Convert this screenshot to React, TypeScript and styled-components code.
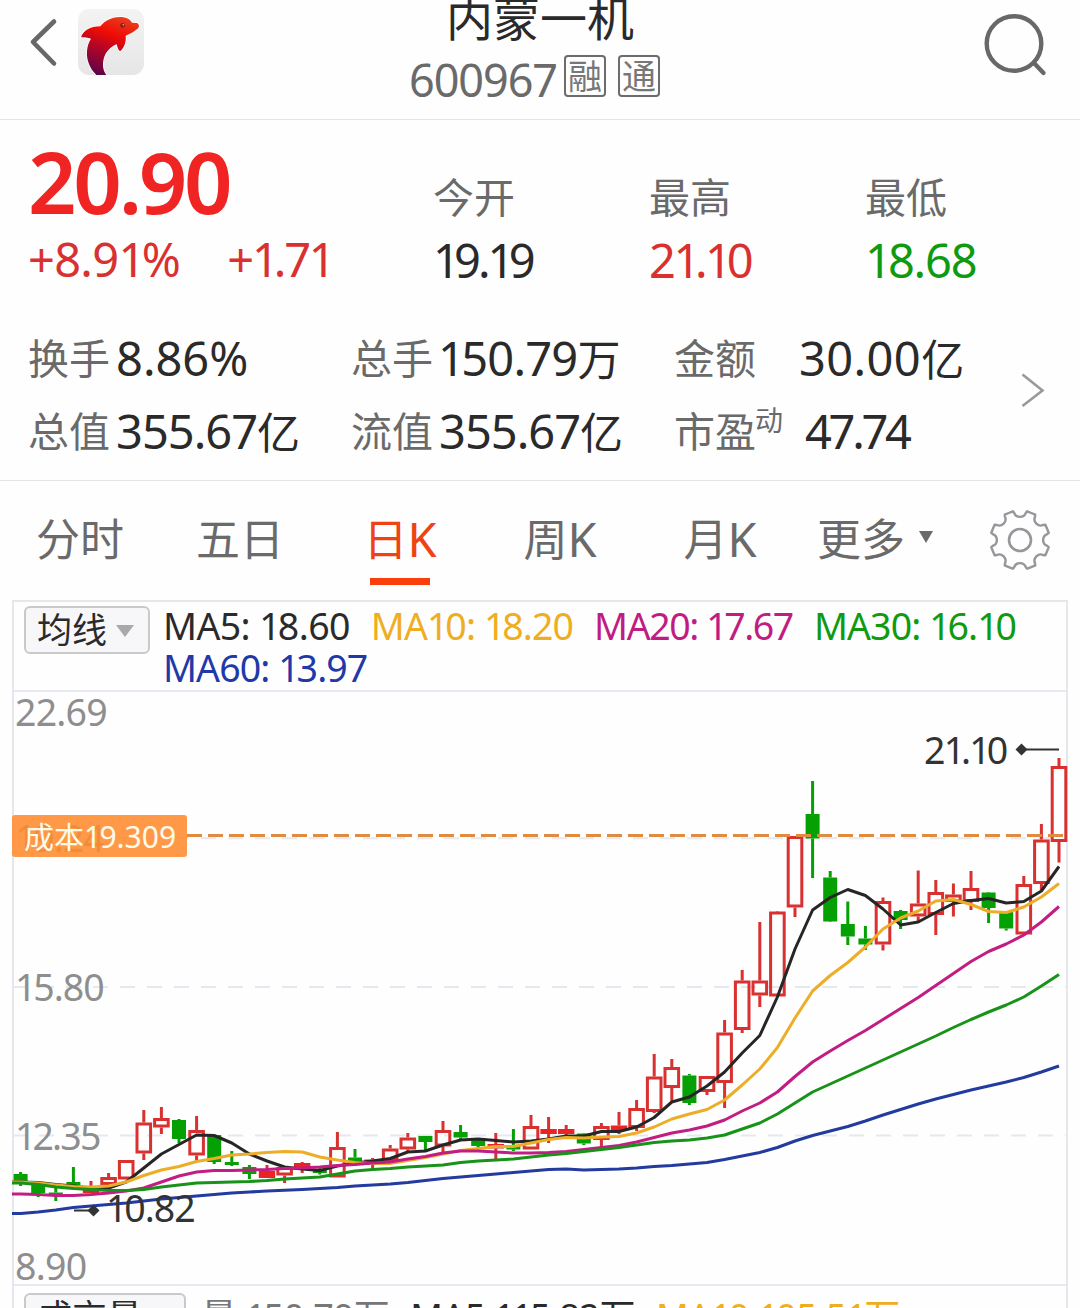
import React from 'react';
import styled, { createGlobalStyle } from 'styled-components';

const Global = createGlobalStyle`
  * { box-sizing: border-box; }
  body { margin: 0; background: #fefefe; }
`;

const Page = styled.div`
  width: 1080px;
  height: 1308px;
  overflow: hidden;
  display: flex;
  flex-direction: column;
  background: #fefefe;
  color: #2a2a2a;
  font-family: 'Noto Sans', 'Noto Sans CJK SC', sans-serif;
  white-space: nowrap;
`;

const Text = styled.span<{ $size: number; $ls?: number; $color?: string; $weight?: number; $h?: number }>`
  --ls: ${(p) => p.$ls ?? 0}px;
  display: block;
  font-size: ${(p) => p.$size}px;
  line-height: ${(p) => p.$h ?? 48}px;
  letter-spacing: var(--ls);
  font-weight: ${(p) => p.$weight ?? 400};
  color: ${(p) => p.$color ?? '#2a2a2a'};
`;
// The figure one is narrower than the other figures
const One = styled.span`
  letter-spacing: calc(var(--ls, 0px) - 0.06em);
`;

function Num({ v }: { v: string }) {
  return <>{v.split(/(1)/).map((s, i) => (s === '1' ? <One key={i}>1</One> : s))}</>;
}

const Header = styled.header`
  height: 120px;
  flex: none;
  display: grid;
  grid-template-columns: 360px 1fr 360px;
  border-bottom: 1px solid #e4e4e4;
`;
const HeaderLeft = styled.div`
  display: flex;
  align-items: flex-start;
  padding: 9px 0 0 28px;
  gap: 18px;
`;
const HeaderRight = styled.div`
  display: flex;
  justify-content: flex-end;
  padding: 12px 32px 0 0;
`;
const TitleBlock = styled.div`
  display: flex;
  flex-direction: column;
  align-items: center;
`;
const CodeRow = styled.div`
  display: flex;
  align-items: flex-start;
  margin-top: 19px;
  margin-left: -11px;
`;
const Badge = styled.span`
  width: 42px;
  height: 42px;
  margin-left: 12px;
  border: 2px solid #6c6c6c;
  border-radius: 4px;
  display: flex;
  align-items: center;
  justify-content: center;
  font-size: 34px;
  line-height: 38px;
  color: #777;
  ${Text} + & { margin-left: 7px; }
`;

const Quote = styled.section`
  height: 361px;
  flex: none;
  border-bottom: 1px solid #e4e4e4;
`;
const PriceGrid = styled.div`
  display: grid;
  grid-template-columns: 405px 216px 216px 1fr;
  height: 164px;
  padding-left: 28px;
`;
const PriceCell = styled.div`
  display: flex;
  flex-direction: column;
  padding-top: 14px;
`;
const ChangeRow = styled.div`
  display: flex;
  gap: 47px;
`;
const QuoteCell = styled.div`
  display: flex;
  flex-direction: column;
  gap: 15px;
  padding-top: 53px;
`;
const StatsArea = styled.div`
  display: flex;
  align-items: center;
  padding: 50px 34px 0 28px;
`;
const StatsGrid = styled.div`
  display: grid;
  grid-template-columns: 323px 323px 1fr;
  grid-auto-rows: 48px;
  row-gap: 25px;
  flex: 1;
`;
const Stat = styled.div<{ $gap: number }>`
  display: flex;
  align-items: flex-start;
  gap: ${(p) => p.$gap}px;
`;
const Chevron = styled.svg`
  margin-bottom: 9px;
`;
const Sup = styled.span`
  font-size: 28px;
  line-height: 28px;
  color: #6a6a6a;
  margin: -1px 16px 0 -7px;
`;
const Unit = styled.span`
  font-size: 43px;
  line-height: 40px;
  letter-spacing: 0;
`;

const Tabs = styled.nav`
  height: 119px;
  flex: none;
  display: grid;
  grid-template-columns: repeat(5, 160px) 150px 1fr;
`;
const Tab = styled.div<{ $active?: boolean }>`
  display: flex;
  flex-direction: column;
  align-items: center;
  padding-top: 32px;
  font-size: 44px;
  line-height: 52px;
  color: ${(p) => (p.$active ? '#ee4314' : '#6a6a6a')};
`;
const TabLabel = styled.span<{ $gap?: number }>`
  display: flex;
  align-items: center;
  gap: ${(p) => p.$gap ?? 0}px;
`;
const K = styled.span`
  font-size: 47px;
`;
const Underline = styled.i`
  width: 60px;
  height: 7px;
  margin-top: 13px;
  background: #fb3f0c;
`;
const Caret = styled.i<{ $color: string; $w: number; $ht: number }>`
  width: 0;
  height: 0;
  margin-bottom: 4px;
  border-left: ${(p) => p.$w}px solid transparent;
  border-right: ${(p) => p.$w}px solid transparent;
  border-top: ${(p) => p.$ht}px solid ${(p) => p.$color};
`;
const GearCell = styled.div`
  padding: 28px 0 0 38.5px;
`;

const Panel = styled.section`
  width: 1056px;
  height: 720px;
  flex: none;
  margin-left: 12px;
  border: 2px solid #e6e7ec;
`;
const Legend = styled.div`
  height: 90px;
  display: flex;
  padding: 4px 0 0 10px;
  border-bottom: 2px solid #e6e9f0;
`;
const Select = styled.div<{ $w: number }>`
  width: ${(p) => p.$w}px;
  height: 48px;
  flex: none;
  display: flex;
  align-items: center;
  gap: 9px;
  padding: 0 0 0 11px;
  border: 2px solid #c9c9c9;
  border-radius: 6px;
  background: #f7f7fa;
  font-size: 35px;
  line-height: 42px;
  ${Caret} { margin: 2px 0 0; }
`;
const LegendItems = styled.div`
  display: flex;
  flex-wrap: wrap;
  column-gap: 21px;
  margin-left: 13px;
  align-content: flex-start;
  margin-top: -1px;
`;
const ChartArea = styled.div`
  position: relative;
  height: 592px;
`;
const ChartSvg = styled.svg`
  display: block;
  margin-left: -2px;
`;
const AxisLabel = styled(Text)<{ $top: number }>`
  position: absolute;
  left: 1px;
  top: ${(p) => p.$top}px;
`;
const Marker = styled(Text)<{ $left: number; $top: number }>`
  position: absolute;
  left: ${(p) => p.$left}px;
  top: ${(p) => p.$top}px;
`;
const CostTag = styled.div`
  position: absolute;
  left: -2px;
  top: 123px;
  width: 175px;
  height: 42px;
  padding: 0 0 3px 12px;
  display: flex;
  align-items: center;
  border-radius: 3px;
  background: rgba(255, 139, 47, 0.88);
  color: #fffbe9;
  font-size: 30px;
`;
const VolumeBar = styled.div`
  display: flex;
  padding: 7px 0 0 10px;
  border-top: 2px solid #e6e9f0;
`;
const VolumeItems = styled.div`
  display: flex;
  gap: 21px;
  margin-left: 15px;
`;

const RED = '#d93030';
const GREEN = '#04a004';

type Kind = 'r' | 'R' | 'g';
// high, body top, body bottom, low, kind (r hollow, R solid red, g solid green)
const candles: [number, number, number, number, Kind][] = [
  [1172, 1174, 1184, 1186, 'g'], [1183, 1184, 1193, 1197, 'g'], [1188, 1192.5, 1194.5, 1201, 'g'],
  [1167, 1182, 1185, 1186, 'g'], [1181, 1189, 1193, 1193, 'R'], [1173, 1177, 1185, 1187, 'r'],
  [1160, 1160, 1179.5, 1179, 'r'], [1110, 1122.5, 1153.5, 1160, 'r'], [1107, 1118, 1127.5, 1134, 'r'],
  [1119, 1120, 1139, 1143, 'g'], [1116, 1130, 1155.5, 1161, 'r'], [1135, 1135, 1162, 1164, 'g'],
  [1151, 1162, 1165, 1166, 'g'], [1165, 1167, 1174, 1179, 'g'], [1165, 1171, 1178, 1178, 'R'],
  [1166, 1167, 1175.5, 1183, 'r'], [1162, 1163, 1170, 1173, 'R'], [1168, 1169, 1173, 1174.5, 'g'],
  [1132, 1147, 1177.5, 1177, 'r'], [1149, 1157.5, 1161, 1162, 'g'], [1158, 1159.5, 1162.5, 1169, 'R'],
  [1145, 1148.5, 1161, 1161, 'r'], [1133, 1137.5, 1149.5, 1153, 'r'], [1136, 1136, 1142, 1150, 'g'],
  [1121, 1130, 1146.5, 1153, 'r'], [1125, 1132, 1137.5, 1140, 'g'], [1138, 1140, 1146, 1148, 'g'],
  [1133, 1144, 1148.5, 1159, 'R'], [1129, 1146, 1149.5, 1151, 'g'], [1115, 1126, 1149.5, 1149, 'r'],
  [1117, 1129, 1134, 1143, 'R'], [1125, 1129, 1134, 1135, 'R'], [1133, 1133.5, 1143.5, 1145, 'g'],
  [1123, 1126, 1140, 1147, 'r'], [1112, 1125.5, 1130.5, 1134, 'R'], [1100, 1108, 1128, 1131, 'r'],
  [1054, 1076.5, 1112, 1113, 'r'], [1059, 1067, 1088, 1101, 'r'], [1074, 1075.5, 1103, 1105, 'g'],
  [1076, 1076, 1092, 1095, 'r'], [1020, 1032.5, 1083, 1108, 'r'], [970, 980.5, 1030, 1033, 'r'],
  [922, 980.5, 995.5, 1007, 'r'], [911, 911.5, 996.5, 996, 'r'], [836, 836, 907.5, 917, 'r'],
  [781, 814, 838.5, 878, 'g'], [871, 877.5, 921.5, 922, 'g'], [901.5, 924, 936.5, 945, 'g'],
  [926, 938.5, 944.5, 950, 'g'], [897.5, 901, 944.5, 950.5, 'r'], [910, 911, 920, 929, 'g'],
  [870.5, 903.5, 916.5, 923, 'r'], [880, 892, 915, 935, 'r'], [883.5, 894.5, 902, 916.5, 'r'],
  [871, 888, 902, 910, 'r'], [892, 892.5, 908, 923, 'g'], [911, 912, 928.5, 930.5, 'g'],
  [876, 884, 934.5, 934, 'r'], [824, 839.5, 884, 890, 'r'], [758, 766, 842, 862.5, 'r'],
];

const ma5 = [1182, 1182.5, 1184.5, 1186, 1188, 1188, 1182, 1168, 1154, 1144.5, 1135, 1135.5, 1143, 1154, 1161, 1167, 1169, 1170.5, 1166, 1163, 1161, 1158.5, 1152, 1151, 1145, 1140, 1139, 1140.5, 1142, 1141, 1139, 1136, 1136, 1131.5, 1131.5, 1127, 1117.5, 1102, 1097, 1086, 1072, 1053, 1035.5, 997, 949, 910, 897.5, 889.5, 895.5, 909, 925, 922, 912.5, 903.5, 900.5, 898.5, 903, 901.5, 891, 866.5];
const ma10 = [1182, 1183, 1185, 1186.5, 1187, 1186, 1182, 1175.5, 1170, 1166.5, 1161.5, 1158.5, 1155, 1154, 1152.5, 1151.5, 1152, 1157, 1160, 1162.5, 1163.5, 1163.5, 1160.5, 1157.5, 1154, 1150.5, 1148.5, 1146.5, 1146.5, 1143, 1139.5, 1137.5, 1138, 1137, 1136.5, 1133, 1127, 1119, 1114, 1109.5, 1100, 1085, 1069, 1047.5, 1018, 991, 975.5, 962.5, 947, 929, 918, 911, 901, 899.5, 904.5, 911.5, 912.5, 907, 897, 883.5];
const ma20 = [1194, 1194.5, 1195.5, 1195.5, 1194.5, 1193, 1191, 1188, 1182, 1176, 1172, 1170.5, 1170.5, 1170, 1169.5, 1168.5, 1168, 1167, 1165.5, 1164.5, 1163, 1162, 1159, 1156.5, 1153, 1151, 1151, 1152, 1153, 1153, 1152.5, 1151.5, 1149.5, 1147.5, 1145.5, 1142, 1137.5, 1133, 1130, 1126, 1120, 1111, 1103, 1092, 1076.5, 1062, 1051, 1040.5, 1030.5, 1019.5, 1008.5, 997.5, 985.5, 973.5, 961.5, 951.5, 944, 935, 922, 906.5];
const ma30 = [1183, 1184.5, 1187, 1188.5, 1189.5, 1190.5, 1190.5, 1189.5, 1187, 1185, 1183, 1182.5, 1182, 1181.5, 1180.5, 1179, 1178, 1177, 1174, 1171, 1169.5, 1168.5, 1167, 1166, 1165, 1162.5, 1161, 1160, 1159, 1157, 1155, 1153.5, 1151.5, 1149.5, 1147.5, 1145, 1142.5, 1141, 1140, 1138, 1135, 1129, 1123, 1114, 1103, 1092, 1084, 1076, 1068, 1060, 1052, 1044, 1036, 1027.5, 1019.5, 1012, 1005, 997, 986, 974.5];
const ma60 = [1213.5, 1212, 1210, 1207.5, 1206, 1204.5, 1203, 1201, 1199, 1197.5, 1196, 1194.5, 1193, 1192, 1191, 1190.2, 1189.4, 1188.5, 1187.5, 1186, 1185, 1184, 1182.5, 1180.5, 1178.5, 1177, 1175.5, 1174, 1172.5, 1171, 1169.5, 1169, 1170, 1169.5, 1169, 1168, 1166.5, 1165.5, 1164, 1162.5, 1159.5, 1156, 1152.5, 1147.5, 1141, 1135.5, 1131, 1126.5, 1121, 1115, 1109.5, 1104, 1099, 1094.5, 1090, 1086, 1082, 1077.5, 1072, 1066];

const xOf = (i: number) => 20.6 + 17.6 * i;
const line = (v: number[]) => `12,${v[0]} ` + v.map((y, i) => `${xOf(i).toFixed(1)},${y}`).join(' ');

function Candle({ i }: { i: number }) {
  const [hi, top, bot, lo, kind] = candles[i];
  const x = xOf(i);
  const c = kind === 'g' ? GREEN : RED;
  return (
    <g stroke={c} strokeWidth={3}>
      {hi < top && <line x1={x} x2={x} y1={hi} y2={top} />}
      {lo > bot && <line x1={x} x2={x} y1={bot} y2={lo} />}
      {kind === 'r' ? (
        <rect x={x - 6.8} y={top + 1.5} width={13.6} height={bot - top - 3} fill="none" />
      ) : (
        <rect x={x - (kind === 'g' ? 7 : 8.2)} y={top} width={kind === 'g' ? 14 : 16.4} height={bot - top} fill={kind === 'R' ? '#ea2424' : c} stroke="none" />
      )}
    </g>
  );
}

function Chart() {
  return (
    <ChartSvg width={1056} height={592} viewBox="12 692 1056 592">
      <g stroke="#e6e8ef" strokeWidth={2} strokeDasharray="15 12">
        <line x1={12} x2={1067} y1={838.3} y2={838.3} />
        <line x1={12} x2={1067} y1={987} y2={987} />
        <line x1={12} x2={1067} y1={1135.5} y2={1135.5} />
      </g>
      {candles.map((_, i) => <Candle key={i} i={i} />)}
      <g fill="none" strokeWidth={3} strokeLinejoin="round">
        <polyline points={line(ma5)} stroke="#262626" />
        <polyline points={line(ma10)} stroke="#ecae28" />
        <polyline points={line(ma20)} stroke="#c11d82" />
        <polyline points={line(ma30)} stroke="#189218" />
        <polyline points={line(ma60)} stroke="#233a9e" />
      </g>
      <line x1={187} x2={1063} y1={835.5} y2={835.5} stroke="#e08a42" strokeWidth={3} strokeDasharray="15 6" />
      <g fill="#333" stroke="#333" strokeWidth={2}>
        <line x1={1022} x2={1059} y1={749.5} y2={749.5} />
        <path d="M1015.5 749.5l6-6 6 6-6 6z" stroke="none" />
        <line x1={74} x2={94} y1={1210.5} y2={1210.5} />
        <path d="M87.5 1210.5l6-6 6 6-6 6z" stroke="none" />
      </g>
    </ChartSvg>
  );
}

function Dolphin() {
  return (
    <svg width="66" height="66" viewBox="234 27 198 198">
      <defs>
        <linearGradient id="tile" x1="0" y1="0" x2="0" y2="1">
          <stop offset="0" stopColor="#f3f3f3" /><stop offset="1" stopColor="#e6e6e6" />
        </linearGradient>
        <linearGradient id="skin" x1="0.65" y1="0" x2="0.3" y2="1">
          <stop offset="0" stopColor="#ea3a1c" /><stop offset="0.3" stopColor="#ee0c04" />
          <stop offset="0.55" stopColor="#b80524" /><stop offset="1" stopColor="#5c0448" />
        </linearGradient>
      </defs>
      <rect x="234" y="27" width="198" height="198" rx="34" fill="url(#tile)" />
      <path
        d="M243 112C250 92 270 79 301 79C318 58 341 50 364 51C382 52 392 60 396 68L410 69C418 71 419 81 413 86C402 95 390 101 377 107C379 125 373 143 360 154C353 148 353 141 350 133C334 139 320 153 313 170C306 190 308 209 319 225H289C269 205 259 180 261 154C262 139 266 127 273 116C263 113 253 112 243 112Z"
        fill="url(#skin)" stroke="#fff" strokeWidth="4" paintOrder="stroke"
      />
      <circle cx="368" cy="76" r="7" fill="#7a2020" /><circle cx="370" cy="74" r="2.5" fill="#d99" />
    </svg>
  );
}

function Gear() {
  const pt = (r: number, deg: number) => {
    const a = (deg * Math.PI) / 180;
    return `${(31 + r * Math.cos(a)).toFixed(2)} ${(31 + r * Math.sin(a)).toFixed(2)}`;
  };
  // eight teeth separated by round notches
  let d = '';
  for (let k = 0; k < 8; k++) {
    const a = k * 45;
    d += `${k ? 'L' : 'M'}${pt(29.6, a - 31)}Q${pt(29.4, a - 22.5)} ${pt(29.6, a - 14)}`;
    d += `L${pt(27.5, a - 12)}C${pt(22.2, a - 10)} ${pt(22.2, a + 10)} ${pt(27.5, a + 12)}`;
  }
  return (
    <svg width="62" height="62" viewBox="0 0 62 62" fill="none" stroke="#96969b" strokeWidth="2.4" strokeLinejoin="round">
      <path d={d + 'Z'} />
      <circle cx="31" cy="31" r="11" strokeWidth="2.6" />
    </svg>
  );
}

const GRAY = '#6a6a6a';
const AXIS = '#8e8e8e';

export default function App() {
  return (
    <Page>
      <Global />
      <Header>
        <HeaderLeft>
          <svg width="32" height="66" viewBox="28 9 32 66" fill="none" stroke="#686868" strokeWidth="4.6" strokeLinecap="round" strokeLinejoin="round">
            <path d="M54 21.5L33 42L54 63.5" />
          </svg>
          <Dolphin />
        </HeaderLeft>
        <TitleBlock>
          <Text $size={47} $h={36}>内蒙一机</Text>
          <CodeRow>
            <Text $size={45} $h={50} $ls={-1.1} $color={GRAY}>600967</Text>
            <Badge>融</Badge>
            <Badge>通</Badge>
          </CodeRow>
        </TitleBlock>
        <HeaderRight>
          <svg width="64" height="66" viewBox="984 12 64 66" fill="none" stroke="#686868" strokeWidth="4.4" strokeLinecap="round">
            <circle cx="1014" cy="43.5" r="27.3" />
            <path d="M1034 63L1043.5 73" />
          </svg>
        </HeaderRight>
      </Header>

      <Quote>
        <PriceGrid>
          <PriceCell>
            <Text $size={85} $h={94} $weight={600} $ls={-3.3} $color="#f12424">20.90</Text>
            <ChangeRow>
              <Text $size={47} $h={62} $ls={-0.7} $color={RED}><Num v="+8.91%" /></Text>
              <Text $size={47} $h={62} $ls={-2.2} $color={RED}><Num v="+1.71" /></Text>
            </ChangeRow>
          </PriceCell>
          <QuoteCell><Text $size={41} $color={GRAY}>今开</Text><Text $size={47} $ls={-3}><Num v="19.19" /></Text></QuoteCell>
          <QuoteCell><Text $size={41} $color={GRAY}>最高</Text><Text $size={47} $ls={-2.5} $color={RED}><Num v="21.10" /></Text></QuoteCell>
          <QuoteCell><Text $size={41} $color={GRAY}>最低</Text><Text $size={47} $ls={-1.2} $color="#109a10"><Num v="18.68" /></Text></QuoteCell>
        </PriceGrid>
        <StatsArea>
          <StatsGrid>
            <Stat $gap={6}><Text $size={41} $color={GRAY}>换手</Text><Text $size={47}>8.86%</Text></Stat>
            <Stat $gap={5}><Text $size={41} $color={GRAY}>总手</Text><Text $size={47} $ls={-0.8}><Num v="150.79" /><Unit>万</Unit></Text></Stat>
            <Stat $gap={43}><Text $size={41} $color={GRAY}>金额</Text><Text $size={47} $ls={0.4}>30.00<Unit>亿</Unit></Text></Stat>
            <Stat $gap={6}><Text $size={41} $color={GRAY}>总值</Text><Text $size={47} $ls={-1}>355.67<Unit>亿</Unit></Text></Stat>
            <Stat $gap={6}><Text $size={41} $color={GRAY}>流值</Text><Text $size={47} $ls={-1}>355.67<Unit>亿</Unit></Text></Stat>
            <Stat $gap={6}><Text $size={41} $color={GRAY}>市盈</Text><Sup>动</Sup><Text $size={47} $ls={-3.3}>47.74</Text></Stat>
          </StatsGrid>
          <Chevron width="26" height="36" viewBox="1020 372 26 36" fill="none" stroke="#99999e" strokeWidth="2.6">
            <path d="M1022.5 374.5L1042.5 390.5L1022.5 406" />
          </Chevron>
        </StatsArea>
      </Quote>

      <Tabs>
        <Tab>分时</Tab>
        <Tab>五日</Tab>
        <Tab $active><TabLabel>日<K>K</K></TabLabel><Underline /></Tab>
        <Tab><TabLabel>周<K>K</K></TabLabel></Tab>
        <Tab><TabLabel>月<K>K</K></TabLabel></Tab>
        <Tab><TabLabel $gap={14}>更多<Caret $color="#6a6a6a" $w={7.5} $ht={12} /></TabLabel></Tab>
        <GearCell><Gear /></GearCell>
      </Tabs>

      <Panel>
        <Legend>
          <Select $w={126}>均线<Caret $color="#a9a9a9" $w={9} $ht={12} /></Select>
          <LegendItems>
            <Text $size={37.5} $h={42} $ls={-0.6}><Num v="MA5: 18.60" /></Text>
            <Text $size={37.5} $h={42} $ls={-0.9} $color="#efad22"><Num v="MA10: 18.20" /></Text>
            <Text $size={37.5} $h={42} $ls={-1.4} $color="#c01c84"><Num v="MA20: 17.67" /></Text>
            <Text $size={37.5} $h={42} $ls={-0.9} $color="#109a10"><Num v="MA30: 16.10" /></Text>
            <Text $size={37.5} $h={42} $ls={-0.9} $color="#2138a8"><Num v="MA60: 13.97" /></Text>
          </LegendItems>
        </Legend>
        <ChartArea>
          <AxisLabel $size={37.5} $ls={-0.8} $top={-4} $color={AXIS}>22.69</AxisLabel>
          <AxisLabel $size={37.5} $ls={-1} $top={122} $color={AXIS}><Num v="19.24" /></AxisLabel>
          <AxisLabel $size={37.5} $ls={-1} $top={271} $color={AXIS}><Num v="15.80" /></AxisLabel>
          <AxisLabel $size={37.5} $ls={-1.8} $top={420} $color={AXIS}><Num v="12.35" /></AxisLabel>
          <AxisLabel $size={37.5} $ls={-0.7} $top={550} $color={AXIS}>8.90</AxisLabel>
          <Chart />
          <Marker $size={37.5} $ls={-1.8} $left={910} $top={34} $color="#333"><Num v="21.10" /></Marker>
          <Marker $size={37.5} $ls={-1} $left={92} $top={492} $color="#333"><Num v="10.82" /></Marker>
          <CostTag><span>成本<Num v="19.309" /></span></CostTag>
        </ChartArea>
        <VolumeBar>
          <Select $w={162}>成交量<Caret $color="#a9a9a9" $w={9} $ht={12} /></Select>
          <VolumeItems>
            <Text $size={36} $ls={-0.4} $color="#777">量 <Num v="150.79万" /></Text>
            <Text $size={36} $ls={-0.5}><Num v="MA5:115.82万" /></Text>
            <Text $size={36} $ls={-0.4} $color="#efad22"><Num v="MA10:105.51万" /></Text>
          </VolumeItems>
        </VolumeBar>
      </Panel>
    </Page>
  );
}
